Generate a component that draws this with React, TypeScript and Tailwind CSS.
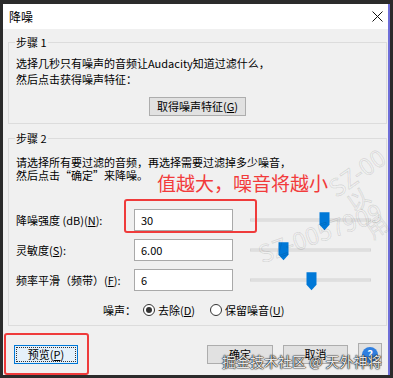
import React from "react";

const font = { fontFamily: '"Microsoft YaHei UI", "Noto Sans CJK SC", "Noto Sans", sans-serif' };

function Btn({ children, className = "" }: { children: React.ReactNode; className?: string }) {
  return (
    <div className={`flex h-[19px] items-center justify-center border border-[#adadad] bg-[#e1e1e1] text-[11px] text-black ${className}`}>
      {children}
    </div>
  );
}

function Thumb() {
  return (
    <svg width="11" height="19" viewBox="0 0 11 19" className="absolute top-1/2 -translate-y-[44%]">
      <path d="M0.5 0.5H10.5V13L5.5 18.5L0.5 13Z" fill="#0078d7" />
    </svg>
  );
}

function SliderRow({ label, hotkey, pre, value, pos }: { label: string; hotkey: string; pre?: string; value: string; pos: number }) {
  return (
    <div className="flex h-[22px] items-center">
      <div className="w-[118px] text-[11px]">
        {label}
        {pre}(<span className="underline">{hotkey}</span>):
      </div>
      <div className="flex h-[22px] w-[99px] items-center border border-[#a9a9a9] bg-white pl-[6px] text-[11px]">{value}</div>
      <div className="relative ml-[17px] h-[22px] w-[121px]">
        <div className="absolute left-0 right-0 top-1/2 h-[3px] -translate-y-1/2 border border-[#d6d6d6] bg-[#e7e7e7]" />
        <div className="absolute top-0 h-full" style={{ left: pos }}>
          <Thumb />
        </div>
      </div>
    </div>
  );
}

function Radio({ checked }: { checked?: boolean }) {
  return (
    <div className="flex h-[12px] w-[12px] items-center justify-center rounded-full border border-[#333] bg-white">
      {checked ? <div className="h-[6px] w-[6px] rounded-full bg-[#333]" /> : null}
    </div>
  );
}

export default function App() {
  return (
    <div className="h-[378px] w-[393px] overflow-hidden bg-[#2b2b2b] pl-[3px] pt-[4px] text-black" style={font}>
      <div className="relative flex h-[371px] w-[387px] flex-col border-r-2 border-[#6e6ed8] bg-[#f0f0f0]">
        {/* title bar */}
        <div className="flex h-[25px] items-center justify-between bg-white pl-[6px] pr-[5px]">
          <span className="text-[12px]">降噪</span>
          <svg width="11" height="11" viewBox="0 0 11 11">
            <path d="M0.5 0.5L10.5 10.5M10.5 0.5L0.5 10.5" stroke="#111" strokeWidth="1" />
          </svg>
        </div>

        <div className="flex flex-col pl-[5px]">
          {/* step 1 */}
          <fieldset className="mt-[5px] w-[379px] border border-[#dcdcdc] px-[7px] pb-[7px]">
            <legend className="-ml-[1px] px-[1px] text-[11px] leading-[16px]">步骤 1</legend>
            <p className="mt-[5px] text-[11px] leading-[16px]">
              选择几秒只有噪声的音频让Audacity知道过滤什么，
              <br />
              然后点击获得噪声特征：
            </p>
            <div className="mt-[10px] flex justify-center">
              <Btn className="w-[97px]">
                取得噪声特征(<span className="underline">G</span>)
              </Btn>
            </div>
          </fieldset>

          {/* step 2 */}
          <fieldset className="mt-[6px] w-[379px] border border-[#dcdcdc] px-[7px] pb-[7px]">
            <legend className="-ml-[1px] px-[1px] text-[11px] leading-[16px]">步骤 2</legend>
            <p className="mt-[10px] text-[11px] leading-[13px]">
              请选择所有要过滤的音频，再选择需要过滤掉多少噪音，
              <br />
              然后点击“确定”来降噪。
            </p>
            <div className="mt-[27px] flex flex-col gap-[8px]">
              <SliderRow label="降噪强度 " pre="(dB)" hotkey="N" value="30" pos={69} />
              <SliderRow label="灵敏度" hotkey="S" value="6.00" pos={28} />
              <SliderRow label="频率平滑（频带）" hotkey="F" value="6" pos={56} />
            </div>
            <div className="ml-[87px] mt-[11px] flex h-[16px] items-center text-[11px]">
              <span className="w-[40px]">噪声：</span>
              <Radio checked />
              <span className="ml-[3px]">
                去除(<span className="underline">D</span>)
              </span>
              <div className="ml-[15px]">
                <Radio />
              </div>
              <span className="ml-[3px]">
                保留噪音(<span className="underline">U</span>)
              </span>
            </div>
          </fieldset>

          {/* buttons */}
          <div className="mt-[17px] flex items-center justify-between pl-[6px] pr-[6px]">
            <div className="flex h-[19px] w-[64px] items-center justify-center border border-[#0078d7] bg-[#e5f1fb] p-[1px]">
              <div className="flex h-full w-full items-center justify-center border border-dotted border-[#333] text-[11px]">
                预览(<span className="underline">P</span>)
              </div>
            </div>
            <div className="flex items-center gap-[10px]">
              <Btn className="w-[66px] text-[#555]">确定</Btn>
              <Btn className="w-[65px] text-[#555]">取消</Btn>
              <div className="flex h-[23px] w-[24px] items-center justify-center border border-[#adadad] bg-[#e1e1e1]">
                <div className="flex h-[16px] w-[16px] items-center justify-center rounded-full bg-[#2f7fe0] text-[11px] font-bold leading-none text-white">?</div>
              </div>
            </div>
          </div>
        </div>

        {/* faint diagonal watermark */}
        <span className="pointer-events-none absolute left-[322px] top-[150px] -rotate-[35deg] text-[24px] text-transparent [-webkit-text-stroke:1px_rgba(0,0,0,0.1)]">SZ-00</span>
        <span className="pointer-events-none absolute left-[352px] top-[172px] -rotate-[35deg] text-[22px] text-transparent [-webkit-text-stroke:1px_rgba(0,0,0,0.1)]">以用</span>
        <span className="pointer-events-none absolute left-[252px] top-[210px] -rotate-[20deg] text-[24px] text-transparent [-webkit-text-stroke:1px_rgba(0,0,0,0.1)]">SZ-0057909</span>

        {/* annotations */}
        <span className="absolute left-[154px] top-[167px] text-[19px] leading-[24px] text-[#f23b3b]">值越大，噪音将越小</span>
        <div className="absolute left-[121px] top-[195px] h-[34px] w-[133px] rounded-[3px] border-2 border-[#ef3b3b]" />
        <div className="absolute left-[1px] top-[329px] h-[42px] w-[85px] rounded-[3px] border-2 border-[#ef3b3b]" />

        <span className="absolute left-[219px] top-[347px] text-[14px] leading-[20px] text-white/90 [text-shadow:0_0_1px_#000,0_0_1px_#000,0_0_2px_#333]">
          掘金技术社区 @ 天外神将
        </span>
      </div>
    </div>
  );
}
